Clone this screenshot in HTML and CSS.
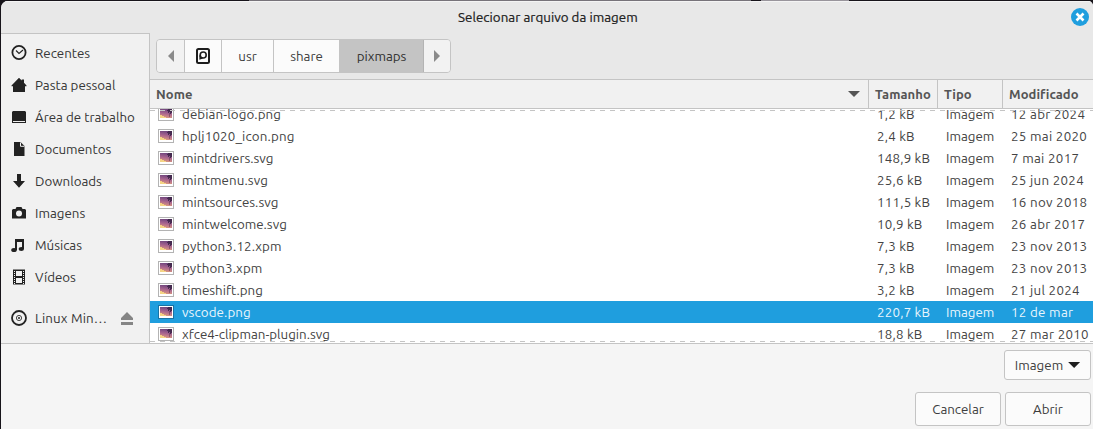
FILE: index.html
```html
<!DOCTYPE html>
<html lang="pt-BR">
<head>
<meta charset="utf-8">
<title>Selecionar arquivo da imagem</title>
<link rel="stylesheet" href="styles.css">
</head>
<body>
<div class="backdrop"><i class="tab tab-main"></i><i class="tab tab-side"></i></div>
<main class="dialog">
  <header class="titlebar">
    <h1>Selecionar arquivo da imagem</h1>
    <button class="close" aria-label="Fechar"><svg viewBox="0 0 18 18"><circle cx="9" cy="9" r="9" fill="#1f9ede"/><path d="M5.500 5.500l7 7M12.500 5.500l-7 7" stroke="#fff" stroke-width="2.600"/></svg></button>
  </header>
  <div class="body">
    <nav class="sidebar">
      <a class="place recent"><svg viewBox="0 0 16 16"><circle cx="8" cy="7.500" r="6.600" fill="none" stroke="#222" stroke-width="1.800"/><path d="M5 5.500l3 3 4-3.500" fill="none" stroke="#222" stroke-width="1.100"/></svg><span>Recentes</span></a>
      <a class="place home"><svg viewBox="0 0 16 16"><path d="M8 .8l2.700 2.700V2.500H13v3.200l2.500 2.800v.8H14V15H2V9.300H.5v-.8z" fill="#222"/></svg><span>Pasta pessoal</span></a>
      <a class="place desktop"><svg viewBox="0 0 16 16"><path d="M2 2h12l1 1v11H1V3z" fill="#222"/><path d="M2 12.500h12" stroke="#eee"/></svg><span>Área de trabalho</span></a>
      <a class="place docs"><svg viewBox="0 0 16 16"><path d="M3 1h6.500l4 4v10H3z" fill="#222"/><path d="M9.500 1.500v3.800h3.800" fill="none" stroke="#f1f1f1"/></svg><span>Documentos</span></a>
      <a class="place down"><svg viewBox="0 0 16 16"><path d="M6 1h4v7h4l-6 6.800L2 8h4z" fill="#222"/></svg><span>Downloads</span></a>
      <a class="place images"><svg viewBox="0 0 16 16"><path d="M2 4h2.500l1-2h5l1 2H14l1 1v8.500H1V5z" fill="#222"/><circle cx="8" cy="8.500" r="3" fill="#f1f1f1"/></svg><span>Imagens</span></a>
      <a class="place music"><svg viewBox="0 0 16 16"><path d="M4 2h9v3H4z" fill="#222"/><path d="M5 2v11M12 3v9" stroke="#222" stroke-width="2"/><ellipse cx="3" cy="13" rx="2.800" ry="2" fill="#222"/><ellipse cx="10.300" cy="12" rx="2.700" ry="2" fill="#222"/></svg><span>Músicas</span></a>
      <a class="place videos"><svg viewBox="0 0 16 16"><path d="M2 .5h12v15H2z" fill="#222"/><path d="M5 2h6v5H5zM5 9h6v5H5z" fill="#f1f1f1"/><path d="M3.500 2v13M12.500 2v13" stroke="#f1f1f1" stroke-dasharray="1 1"/></svg><span>Vídeos</span></a>
      <a class="place disk"><svg viewBox="0 0 16 16"><circle cx="8" cy="8" r="7" fill="none" stroke="#222" stroke-width="1.800"/><circle cx="8" cy="8" r="2.600" fill="none" stroke="#444" stroke-width="1"/><circle cx="8" cy="8" r="1" fill="#222"/></svg><span>Linux Min…</span><svg class="eject" viewBox="0 0 12 13"><path d="M6 0l6 6v2H0V6zM0 10h12v3H0z" fill="#858585"/></svg></a>
    </nav>
    <section class="browser">
      <div class="toolbar">
        <div class="path">
          <button class="step prev" aria-label="Voltar"><svg viewBox="0 0 6 12"><path d="M6 0v12L0 6z"/></svg></button>
          <button class="crumb root" aria-label="Raiz"><svg viewBox="0 0 14 16"><rect x="1" y="1" width="12" height="14" rx="1.500" fill="none" stroke="#1d1d1d" stroke-width="2"/><circle cx="7.200" cy="7" r="3" fill="none" stroke="#1d1d1d" stroke-width="1.600"/><path d="M3.400 7v4.800l3.600-1.300z" fill="#1d1d1d"/></svg></button>
          <button class="crumb usr"><span>usr</span></button>
          <button class="crumb share"><span>share</span></button>
          <button class="crumb current"><span>pixmaps</span></button>
          <button class="step next" aria-label="Avançar"><svg viewBox="0 0 6 12"><path d="M0 0v12l6-6z"/></svg></button>
        </div>
      </div>
      <div class="columns head">
        <div class="name">Nome<i class="arrow"></i></div><div class="size">Tamanho</div><div class="type">Tipo</div><div class="date">Modificado</div>
      </div>
      <div class="list" id="files"></div>
    </section>
  </div>
  <footer class="actions">
    <button class="filter"><span>Imagem</span><i class="arrow"></i></button>
    <div class="buttons"><button class="cancel"><span>Cancelar</span></button><button class="open"><span>Abrir</span></button></div>
  </footer>
</main>
<script src="files.js"></script>
</body>
</html>
```
FILE: files.js
```js
// name, size, modified, name tracking class
const files = [
  ["debian-logo.png", "1,2 kB", "12 abr 2024", "wide"],
  ["hplj1020_icon.png", "2,4 kB", "25 mai 2020", "wider"],
  ["mintdrivers.svg", "148,9 kB", "7 mai 2017", ""],
  ["mintmenu.svg", "25,6 kB", "25 jun 2024", "wide"],
  ["mintsources.svg", "111,5 kB", "16 nov 2018", ""],
  ["mintwelcome.svg", "10,9 kB", "26 abr 2017", ""],
  ["python3.12.xpm", "7,3 kB", "23 nov 2013", "wider"],
  ["python3.xpm", "7,3 kB", "23 nov 2013", "wide"],
  ["timeshift.png", "3,2 kB", "21 jul 2024", ""],
  ["vscode.png", "220,7 kB", "12 de mar", "wide"],
  ["xfce4-clipman-plugin.svg", "18,8 kB", "27 mar 2010", ""]
];
const thumb = `<svg class="thumb" viewBox="0 0 16 14" shape-rendering="crispEdges"><defs><linearGradient id="sky" x1=".6" y1="0" x2=".4" y2="1"><stop stop-color="#6b437c"/><stop offset=".5" stop-color="#a8648e"/><stop offset="1" stop-color="#dd9a80"/></linearGradient></defs><path class="frame" d="M0 0h16v14H0z"/><path fill="#fff" d="M1 1h14v12H1z"/><path fill="url(#sky)" d="M2 2h12v9H2z"/><path fill="#3b2347" fill-opacity=".85" d="M9 3h1V2h4v4h-1v1h-1V5h-1v1h-1V4H9z"/><path fill="#55304f" fill-opacity=".5" d="M11 6h1v4h-1z"/><path fill="#f5d484" d="M2 8h2v1h2v1h2v1H2z"/></svg>`;
document.getElementById("files").innerHTML = files.map(([name, size, date, tracking]) =>
  `<div class="columns row${name === "vscode.png" ? " selected" : ""}"><div class="name">${thumb}<span class="${tracking}">${name}</span></div><div class="size">${size}</div><div class="type">Imagem</div><div class="date">${date}</div></div>`
).join("");
```
FILE: styles.css
```css
* { box-sizing: border-box; }
body { margin: 0; width: 1093px; height: 429px; overflow: hidden; background: #17141a; font: 13.333px/20px Ubuntu, "Noto Sans", sans-serif; color: #3d3d3d; display: flex; flex-direction: column; }
button { font: inherit; color: inherit; padding: 0; margin: 0; }
.backdrop { height: 1px; display: flex; flex: none; padding-left: 249px; gap: 10px; }
.tab { background: #77737a; width: 502px; }
.tab-side { width: 88px; background: #99959c; }
.dialog { margin-left: 1px; flex: 1; background: #f5f5f5; border-radius: 7px 5px 0 0; overflow: hidden; display: flex; flex-direction: column; }
.titlebar { height: 32px; flex: none; background: #e8e8e8; display: flex; align-items: center; justify-content: flex-end; padding-right: 4px; box-shadow: inset 0 1px #f4f4f4; }
.titlebar h1 { font: inherit; letter-spacing: .04px; color: #202020; margin: 0; flex: 1; padding: 2px 0 0 457px; -webkit-text-stroke: .2px; }
.close { border: 0; background: none; width: 18px; height: 18px; }
.close svg { display: block; }
.body { height: 311px; display: flex; flex: none; border-bottom: 1px solid #c4c4c4; }
.sidebar { width: 149px; flex: none; background: #f1f1f1; border: solid #c4c4c4; border-width: 1px 1px 0 0; padding-top: 3px; }
.place { height: 32px; display: flex; align-items: center; padding: 0 16px 0 10px; gap: 8px; color: #363636; white-space: nowrap; }
.place svg { width: 16px; height: 16px; flex: none; }
.place span, .path span, .actions span, .row span { padding-top: 2px; }
.place.disk { margin-top: 9px; }
.place.disk span { letter-spacing: .15px; }
.place .eject { width: 12px; height: 13px; margin-left: auto; }
.browser { flex: 1; min-width: 0; display: flex; flex-direction: column; background: #fff; }
.toolbar { height: 46px; flex: none; background: #e8e8e8; padding: 6px; }
.path { display: flex; height: 34px; width: 295px; border: 1px solid #c4c4c4; border-radius: 4px; overflow: hidden; }
.path button { border: 0; border-right: 1px solid #c4c4c4; background: #fbfbfb; display: flex; align-items: center; justify-content: center; }
.path .step { background: #f2f2f2; }
.step svg { width: 6px; height: 12px; fill: #8a8a8a; }
.path .prev { width: 28px; }
.path .root { width: 37px; }
.root svg { width: 14px; height: 16px; }
.path .usr { width: 52px; }
.path .share { width: 66px; }
.path .current { width: 84px; background: #c4c4c4; color: #303030; border-color: #b4b4b4; }
.path .next { width: 26px; border: 0; }
.columns { display: grid; grid-template-columns: 719px 69px 65px 1fr; white-space: nowrap; }
.head { height: 30px; flex: none; background: #f1f1f1; border: solid #c4c4c4; border-width: 1px 0; color: #555; font-weight: bold; font-size: 13px; line-height: 28px; letter-spacing: .08px; }
.head > div { padding-left: 6px; border-right: 1px solid #c4c4c4; }
.head .date { border: 0; }
.head .name { display: flex; justify-content: space-between; align-items: center; padding-right: 8px; }
.arrow { width: 12px; height: 6px; background: currentColor; clip-path: polygon(0 0, 100% 0, 50% 100%); }
.list { flex: 1; overflow: hidden; position: relative; display: flex; flex-direction: column; }
.list::before, .list::after { content: ""; position: absolute; left: 0; right: 0; height: 1px; background: repeating-linear-gradient(90deg, #c4c4c4 0 5px, transparent 5px 10px); }
.list::before { top: 1px; }
.list::after { bottom: 1px; }
.row { height: 22px; flex: none; grid-template-rows: 22px; line-height: 24px; color: #434343; }
.row:first-child { margin-top: -6px; }
.row > div { padding-left: 8px; }
.row .size { letter-spacing: .2px; }
.row .date { letter-spacing: .3px; }
.row .name { display: flex; align-items: center; gap: 8px; line-height: 22px; }
.wide { letter-spacing: .1px; }
.wider { letter-spacing: .15px; }
.thumb { width: 16px; height: 14px; flex: none; }
.frame { fill: #b3b3b3; }
.row.selected { background: #1f9ede; color: #e9f6fd; }
.selected .frame { fill: #1973a4; }
.actions { flex: 1; display: flex; flex-direction: column; align-items: flex-end; padding: 6px 2px 0 0; gap: 12px; }
.actions button { border: 1px solid #c4c4c4; border-radius: 3px; background: #fbfbfb; height: 34px; width: 86px; display: flex; align-items: center; justify-content: center; }
.actions .filter { width: 87px; height: 30px; gap: 5px; }
.filter .arrow { background: #1f1f1f; }
.buttons { display: flex; gap: 4px; }
```
